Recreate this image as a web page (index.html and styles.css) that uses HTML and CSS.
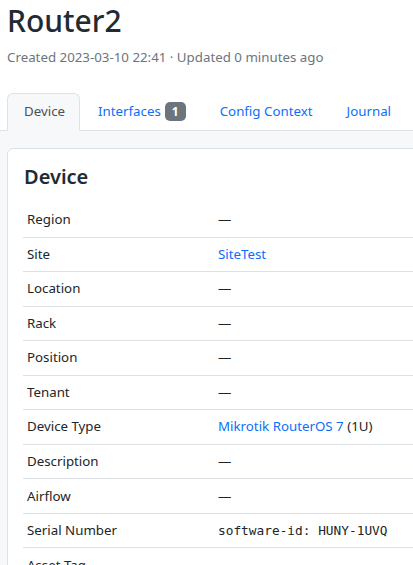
FILE: index.html
```html
<!DOCTYPE html>
<html>
<head>
<meta charset="utf-8">
<link rel="stylesheet" href="styles.css">
</head>
<body>
<div class="page">
  <header class="page-header">
    <h1 class="title">Router2</h1>
    <div class="meta">Created 2023-03-10 22:41 · Updated 0 minutes ago</div>
  </header>
  <ul class="tabs">
    <li class="tab active">Device</li>
    <li class="tab"><a href="#">Interfaces</a><span class="badge">1</span></li>
    <li class="tab"><a href="#">Config Context</a></li>
    <li class="tab"><a href="#">Journal</a></li>
  </ul>
  <div class="tab-content">
    <div class="card">
      <h2 class="card-title">Device</h2>
      <table class="attrs">
        <tr><th>Region</th><td>—</td></tr>
        <tr><th>Site</th><td><a href="#">SiteTest</a></td></tr>
        <tr><th>Location</th><td>—</td></tr>
        <tr><th>Rack</th><td>—</td></tr>
        <tr><th>Position</th><td>—</td></tr>
        <tr><th>Tenant</th><td>—</td></tr>
        <tr><th>Device Type</th><td><a href="#">Mikrotik RouterOS 7</a> (1U)</td></tr>
        <tr><th>Description</th><td>—</td></tr>
        <tr><th>Airflow</th><td>—</td></tr>
        <tr><th>Serial Number</th><td><span class="mono">software-id: HUNY-1UVQ</span></td></tr>
        <tr><th>Asset Tag</th><td>—</td></tr>
      </table>
    </div>
  </div>
</div>
</body>
</html>
```

FILE: styles.css
```css
html, body {
  margin: 0;
  padding: 0;
  background: #ffffff;
  overflow: hidden;
}
body {
  font-family: "Noto Sans", "Open Sans", sans-serif;
  font-size: 13.3px;
  line-height: 21px;
  color: #212529;
}
.page {
  width: 560px;
}
.page-header {
  padding: 0 7px;
}
.title {
  margin: 0;
  padding-top: 1px;
  font-size: 30px;
  font-weight: 500;
  line-height: 40px;
  color: #232a32;
}
.meta {
  margin-top: 6px;
  color: #6c757d;
}
.tabs {
  list-style: none;
  margin: 25px 0 0;
  padding: 0 7px;
  display: flex;
  gap: 2px;
  border-bottom: 1px solid #dee2e6;
}
.tab {
  padding: 7px 15px 8px;
  margin-bottom: -1px;
  border: 1px solid transparent;
  border-radius: 6px 6px 0 0;
  display: flex;
  align-items: center;
  gap: 4px;
}
.tab a {
  color: #0d6efd;
  text-decoration: none;
}
.tab.active {
  padding: 7px 14px 8px 16px;
  background: #f7f8fa;
  border-color: #dee2e6 #dee2e6 #f7f8fa;
  color: #495057;
}
.badge {
  background: #6c757d;
  color: #fff;
  font-weight: 700;
  font-size: 12px;
  line-height: 19px;
  padding: 0 7px;
  border-radius: 5px;
}
.tab-content {
  background: #f7f8fa;
  padding: 17px 7px 40px;
}
.card {
  background: #fff;
  border: 1px solid #dee2e6;
  border-radius: 6px;
  padding: 16px 16px 0 15px;
}
.card-title {
  margin: 0 0 14px 1px;
  font-size: 20px;
  font-weight: 600;
  line-height: 24px;
  color: #232a32;
}
.attrs {
  width: 100%;
  border-collapse: collapse;
}
.attrs th, .attrs td {
  text-align: left;
  font-weight: 400;
  padding: 6.28px 4px;
  border-bottom: 1px solid #dee2e6;
  vertical-align: top;
}
.attrs tr:last-child th, .attrs tr:last-child td {
  border-bottom: none;
}
.attrs th {
  width: 183px;
}
.attrs a {
  color: #0d6efd;
  text-decoration: none;
}
.mono {
  font-family: "DejaVu Sans Mono", "Liberation Mono", monospace;
  font-size: 12.8px;
}
```
